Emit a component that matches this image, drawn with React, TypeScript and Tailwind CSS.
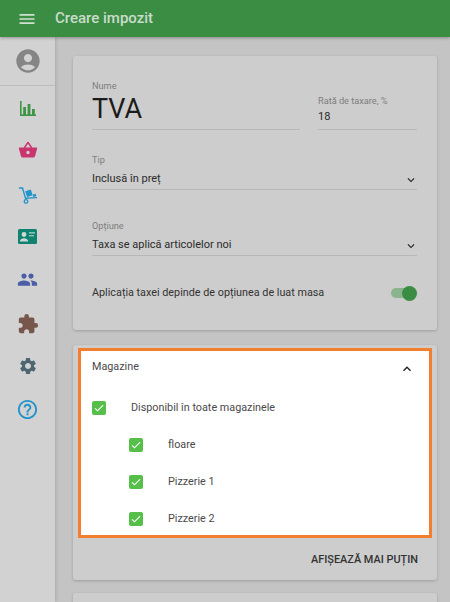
import { MdAccountCircle, MdCheck, MdExpandLess, MdExpandMore, MdExtension, MdHelpOutline, MdMenu, MdPeople, MdSettings, MdShoppingBasket } from "react-icons/md";

function Chart() {
  return (
    <svg width="16" height="15" viewBox="0 0 16 15" fill="#3f9447">
      <rect x="0" y="0" width="1.6" height="15" />
      <rect x="0" y="13.4" width="16" height="1.6" />
      <rect x="3.2" y="6" width="2.8" height="8" />
      <rect x="7.6" y="3" width="2.8" height="11" />
      <rect x="12" y="8" width="2.8" height="6" />
    </svg>
  );
}

function Dolly() {
  return (
    <svg width="18" height="17" viewBox="0 0 18 17" fill="#2394c9">
      <path d="M0 1h3.5l3 10.2L18 10.6" fill="none" stroke="#2394c9" strokeWidth="1.4" />
      <circle cx="7" cy="14.4" r="1.8" fill="none" stroke="#2394c9" strokeWidth="1.3" />
      <path d="M6.2 4.2l5.6-1.6 1.9 5.6-5.6 1.7z" />
      <path d="M13.6 7.6l3-.8.8 2.4-3 .8z" />
    </svg>
  );
}

function IdCard() {
  return (
    <svg width="19" height="15" viewBox="0 0 19 15">
      <rect width="19" height="15" rx="1.5" fill="#0f8270" />
      <circle cx="6" cy="5.5" r="2.4" fill="#cfd8d6" />
      <path d="M1.8 12.5c0-2.2 2.6-3.2 4.2-3.2s4.2 1 4.2 3.2z" fill="#cfd8d6" />
      <rect x="11" y="3" width="6" height="1.6" fill="#8fc0b8" />
      <rect x="11" y="6" width="5" height="1.4" fill="#8fc0b8" />
    </svg>
  );
}

function Box({ className }: { className: string }) {
  return (
    <div className={`w-[14px] h-[14px] rounded-[2px] bg-[#55bf49] flex items-center justify-center ${className}`}>
      <MdCheck className="text-white" size={12} />
    </div>
  );
}

function Field({ label, value, big, tight }: { label: string; value: string; big?: boolean; tight?: boolean }) {
  const valueClass = big
    ? "text-[27px] leading-[34px] text-[#1c1c1c] pb-[3px]"
    : tight
      ? "text-[11px] leading-[16px] text-[#2b2b2b] mt-[2px] pb-[4px]"
      : "text-[11px] leading-[16px] text-[#2b2b2b] mt-[5px] pb-[2px]";
  return (
    <div className="border-b border-[#b8b8b8]">
      <div className="text-[9.2px] leading-[12px] text-[#7d7d7d]">{label}</div>
      <div className={valueClass}>{value}</div>
    </div>
  );
}

function Select({ label, value }: { label: string; value: string }) {
  return (
    <div className="relative">
      <Field label={label} value={value} />
      <MdExpandMore className="absolute right-[-1px] top-[19px] text-[#222]" size={14} />
    </div>
  );
}

export default function App() {
  return (
    <div className="w-[450px] h-[602px] overflow-hidden bg-[#c4c4c4] flex flex-col font-['Roboto',sans-serif]">
      <div className="h-[37px] shrink-0 bg-[#3b8d43] flex items-center pl-[17px] shadow-[0_1px_3px_rgba(0,0,0,0.3)] z-10">
        <MdMenu className="text-[#cfe0d0]" size={20} />
        <div className="ml-[18px] text-[15px] font-medium text-[#c9dccb]">Creare impozit</div>
      </div>
      <div className="flex flex-1 min-h-0">
        <div className="w-[55px] shrink-0 bg-[#d2d2d2] flex flex-col items-center shadow-[1px_0_3px_rgba(0,0,0,0.15)]">
          <div className="w-full h-[49px] shrink-0 border-b border-[#bcbcbc] flex items-center justify-center">
            <MdAccountCircle className="text-[#858585]" size={28} />
          </div>
          <div className="mt-[15px] h-[15px] flex items-center"><Chart /></div>
          <div className="mt-[24px]"><MdShoppingBasket className="text-[#c9356f]" size={20} /></div>
          <div className="mt-[27px]"><Dolly /></div>
          <div className="mt-[25px]"><IdCard /></div>
          <div className="mt-[25px]"><MdPeople className="text-[#4c5ea8]" size={21} /></div>
          <div className="mt-[23px]"><MdExtension className="text-[#77574b]" size={22} /></div>
          <div className="mt-[21px]"><MdSettings className="text-[#4d6672]" size={20} /></div>
          <div className="mt-[22px]"><MdHelpOutline className="text-[#2394c9]" size={23} /></div>
        </div>
        <div className="flex-1 min-w-0 pl-[18px] pr-[13px] pt-[19px]">
          <div className="h-[274px] rounded-[3px] bg-[#cdcdcd] shadow-[0_1px_3px_rgba(0,0,0,0.2)] pl-[19px] pr-[20px] pt-[24px]">
            <div className="flex gap-[18px] items-end">
              <div className="flex-1"><Field label="Nume" value="TVA" big /></div>
              <div className="w-[99px]"><Field label="Rată de taxare, %" value="18" tight /></div>
            </div>
            <div className="mt-[24px]"><Select label="Tip" value="Inclusă în preț" /></div>
            <div className="mt-[30px]"><Select label="Opțiune" value="Taxa se aplică articolelor noi" /></div>
            <div className="mt-[29px] flex items-center justify-between text-[10.8px] text-[#333]">
              <span>Aplicația taxei depinde de opțiunea de luat masa</span>
              <div className="relative w-[26px] h-[16px] flex items-center">
                <div className="w-[24px] h-[10px] rounded-full bg-[#8ab48d]" />
                <div className="absolute right-0 w-[15px] h-[15px] rounded-full bg-[#3b8d43]" />
              </div>
            </div>
          </div>
          <div className="mt-[15px] h-[235px] rounded-[3px] bg-[#cdcdcd] shadow-[0_1px_3px_rgba(0,0,0,0.2)] pt-[3px] px-[5px]">
            <div className="h-[190px] border-[3px] border-[#f27f30] bg-white pl-[11px] pr-[14px] text-[10.8px] text-[#4a4a4a]">
              <div className="h-[33px] flex items-center justify-between">
                <span>Magazine</span>
                <MdExpandLess className="text-[#222] mt-[3px]" size={16} />
              </div>
              <div className="mt-[5px] h-[37px] flex items-center"><Box className="mr-[25px]" /><span className="pt-[2px]">Disponibil în toate magazinele</span></div>
              <div className="h-[37px] flex items-center pl-[37px]"><Box className="mr-[25px]" /><span className="pt-[2px]">floare</span></div>
              <div className="h-[37px] flex items-center pl-[37px]"><Box className="mr-[25px]" /><span className="pt-[2px]">Pizzerie 1</span></div>
              <div className="h-[37px] flex items-center pl-[37px]"><Box className="mr-[25px]" /><span className="pt-[2px]">Pizzerie 2</span></div>
            </div>
            <div className="mt-[14px] text-right pr-[14px] text-[10.9px] font-medium text-[#333]">AFIȘEAZĂ MAI PUȚIN</div>
          </div>
          <div className="mt-[13px] h-[40px] rounded-[3px] bg-[#cdcdcd] shadow-[0_1px_3px_rgba(0,0,0,0.2)]" />
        </div>
      </div>
    </div>
  );
}
